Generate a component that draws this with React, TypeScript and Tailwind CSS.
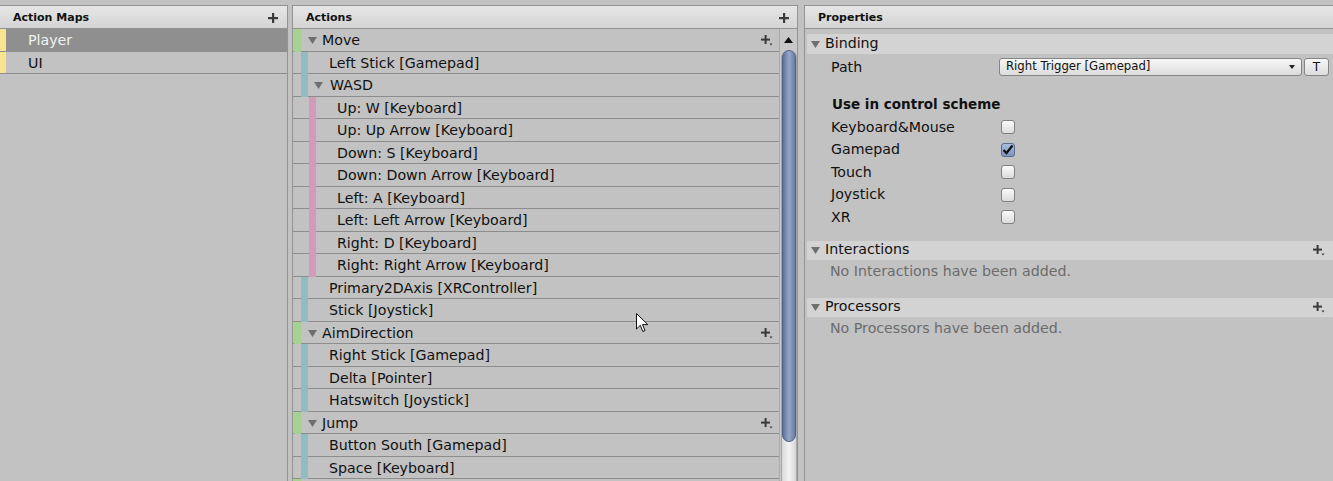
import React from "react";

type RowKind = "action" | "binding" | "composite" | "part";

const ROWS: { kind: RowKind; label: string }[] = [
  { kind: "action", label: "Move" },
  { kind: "binding", label: "Left Stick [Gamepad]" },
  { kind: "composite", label: "WASD" },
  { kind: "part", label: "Up: W [Keyboard]" },
  { kind: "part", label: "Up: Up Arrow [Keyboard]" },
  { kind: "part", label: "Down: S [Keyboard]" },
  { kind: "part", label: "Down: Down Arrow [Keyboard]" },
  { kind: "part", label: "Left: A [Keyboard]" },
  { kind: "part", label: "Left: Left Arrow [Keyboard]" },
  { kind: "part", label: "Right: D [Keyboard]" },
  { kind: "part", label: "Right: Right Arrow [Keyboard]" },
  { kind: "binding", label: "Primary2DAxis [XRController]" },
  { kind: "binding", label: "Stick [Joystick]" },
  { kind: "action", label: "AimDirection" },
  { kind: "binding", label: "Right Stick [Gamepad]" },
  { kind: "binding", label: "Delta [Pointer]" },
  { kind: "binding", label: "Hatswitch [Joystick]" },
  { kind: "action", label: "Jump" },
  { kind: "binding", label: "Button South [Gamepad]" },
  { kind: "binding", label: "Space [Keyboard]" },
  // next action is scrolled out of view, only its bar peeks in
  { kind: "action", label: "" },
];

const SCHEMES = [
  { label: "Keyboard&Mouse", checked: false },
  { label: "Gamepad", checked: true },
  { label: "Touch", checked: false },
  { label: "Joystick", checked: false },
  { label: "XR", checked: false },
];

const Triangle = ({ className = "" }: { className?: string }) => (
  <svg width="9" height="7" viewBox="0 0 9 7" className={className}>
    <polygon points="0,0 9,0 4.5,7" fill="#6f6f6f" />
  </svg>
);

const Plus = () => (
  <svg width="10" height="10" viewBox="0 0 10 10">
    <rect x="4" y="0" width="2.2" height="10" fill="#3a3a3a" />
    <rect x="0" y="4" width="10" height="2.2" fill="#3a3a3a" />
  </svg>
);

const PlusMenu = () => (
  <svg width="12" height="11" viewBox="0 0 12 11">
    <rect x="3.6" y="0" width="2" height="9" fill="#3a3a3a" />
    <rect x="0" y="3.6" width="9" height="2" fill="#3a3a3a" />
    <polygon points="8.5,8.5 11.5,8.5 10,10.5" fill="#3a3a3a" />
  </svg>
);

const PanelHeader = ({ title, plus = true, right = "pr-[9px]" }: { title: string; plus?: boolean; right?: string }) => (
  <div className={`flex h-[23px] shrink-0 items-center justify-between border-b border-[#939393] bg-gradient-to-b from-[#e6e6e6] to-[#d4d4d4] pt-[2px] pl-[13px] ${right}`}>
    <span className="text-[11px] font-bold text-[#111]">{title}</span>
    {plus && <Plus />}
  </div>
);

const ActionRow = ({ kind, label }: { kind: RowKind; label: string }) => {
  const bar =
    kind === "action"
      ? "left-[1px] bg-[#a7d193]"
      : kind === "part"
        ? "left-[16px] bg-[#d29bba]"
        : "left-[8px] bg-[#90bdc0]";
  return (
    <div className="relative flex h-[22.5px] shrink-0 items-center border-b border-[#8d8d8d] pt-[2px] pr-[6px]">
      <span className={`absolute top-0 bottom-[-1px] w-[7px] ${bar}`} />
      {kind === "action" && label && (
        <div className="flex flex-1 items-center pl-[15px]">
          <span className="flex w-[14px] items-center">
            <Triangle />
          </span>
          <span className="flex-1">{label}</span>
          <PlusMenu />
        </div>
      )}
      {kind === "composite" && (
        <div className="flex flex-1 items-center pl-[21px]">
          <span className="flex w-[16px] items-center">
            <Triangle />
          </span>
          <span>{label}</span>
        </div>
      )}
      {kind === "binding" && <span className="pl-[36px]">{label}</span>}
      {kind === "part" && <span className="pl-[44px]">{label}</span>}
    </div>
  );
};

const Checkbox = ({ checked }: { checked: boolean }) => (
  <span
    className={`flex h-[14px] w-[14px] items-center justify-center rounded-[3px] border ${
      checked
        ? "border-[#5b6c8c] bg-gradient-to-b from-[#a9bde0] to-[#7e95c2]"
        : "border-[#808080] bg-gradient-to-b from-[#fbfbfb] to-[#dcdcdc]"
    }`}
  >
    {checked && (
      <svg width="12" height="11" viewBox="0 0 12 11">
        <path d="M1.5 6 L4.5 9 L10.5 1.5" stroke="#111" strokeWidth="2.2" fill="none" />
      </svg>
    )}
  </span>
);

const SectionHeader = ({ title, plus, h = "h-[19px]" }: { title: string; plus?: boolean; h?: string }) => (
  <div className={`ml-[2px] flex ${h} shrink-0 items-center bg-[#d3d3d3] pl-[4px] pr-[8px]`}>
    <Triangle className="mr-[5px]" />
    <span className="flex-1">{title}</span>
    {plus && <PlusMenu />}
  </div>
);

export default function App() {
  return (
    <div
      className="relative flex h-[481px] w-[1333px] overflow-hidden bg-[#c2c2c2] pt-[5px] text-[14.2px] text-[#111]"
      style={{ fontFamily: '"DejaVu Sans", sans-serif' }}
    >
      {/* Action maps */}
      <div className="flex w-[288px] shrink-0 flex-col border-t border-r border-[#939393]">
        <PanelHeader title="Action Maps" />
        <div className="flex h-[22.5px] items-center border-b border-[#8d8d8d]">
          <span className="h-full w-[6px] bg-[#fbe28f]" />
          <span className="flex h-full flex-1 items-center bg-[#8f8f8f] pt-[2px] pl-[22px] text-[#f2f2f2]">Player</span>
        </div>
        <div className="flex h-[22.5px] items-center border-b border-[#8d8d8d]">
          <span className="h-full w-[6px] bg-[#fbe28f]" />
          <span className="pt-[2px] pl-[22px]">UI</span>
        </div>
      </div>

      {/* Actions */}
      <div className="ml-[4px] flex w-[506px] shrink-0 flex-col border-t border-r border-l border-[#939393]">
        <PanelHeader title="Actions" right="pr-[8px]" />
        <div className="flex min-h-0 flex-1">
          <div className="flex min-w-0 flex-1 flex-col overflow-hidden">
            {ROWS.map((r, i) => (
              <ActionRow key={i} kind={r.kind} label={r.label} />
            ))}
          </div>
          <div className="flex w-[18px] shrink-0 flex-col items-center border-l border-[#a9a9a9] bg-[#c8c8c8]">
            <div className="flex h-[21px] w-full items-center justify-center">
              <svg width="9" height="6" viewBox="0 0 9 6">
                <polygon points="0,6 9,6 4.5,0" fill="#111" />
              </svg>
            </div>
            <div className="flex w-[16px] flex-1 flex-col rounded-t-[8px] border-x border-[#a7a7a7] bg-gradient-to-r from-[#d9d9d9] via-[#f3f3f3] to-[#d6d6d6]">
              <div className="h-[392px] rounded-[8px] border border-[#4f6080] bg-gradient-to-r from-[#5f7296] via-[#94a7ca] to-[#6a7ea3]" />
            </div>
          </div>
        </div>
      </div>

      {/* Properties */}
      <div className="ml-[6px] flex flex-1 flex-col border-t border-l border-[#939393]">
        <PanelHeader title="Properties" plus={false} />
        <div className="mt-[5px]">
          <SectionHeader title="Binding" h="h-[20px]" />
        </div>
        <div className="mt-[2px] flex h-[22px] items-center pl-[26px] pr-[4px]">
          <span className="w-[168px] pt-[2px]">Path</span>
          <div className="flex h-[18px] flex-1 items-center rounded-[3px] border border-[#858585] bg-gradient-to-b from-[#f7f7f7] to-[#dcdcdc] pl-[6px] pr-[6px] text-[11.7px]">
            <span className="flex-1">Right Trigger [Gamepad]</span>
            <svg width="6" height="4" viewBox="0 0 6 4">
              <polygon points="0,0 6,0 3,4" fill="#222" />
            </svg>
          </div>
          <div className="ml-[2px] flex h-[18px] w-[25px] items-center justify-center rounded-[3px] border border-[#858585] bg-gradient-to-b from-[#f7f7f7] to-[#dcdcdc] text-[12px]">
            T
          </div>
        </div>
        <div className="mt-[17px] flex h-[18px] items-center pl-[27px] text-[13.5px] font-bold">
          Use in control scheme
        </div>
        <div className="mt-[3px] flex flex-col">
          {SCHEMES.map((s) => (
            <div key={s.label} className="flex h-[22.5px] items-center pl-[26px]">
              <span className="w-[170px]">{s.label}</span>
              <Checkbox checked={s.checked} />
            </div>
          ))}
        </div>
        <div className="mt-[12px]">
          <SectionHeader title="Interactions" plus />
        </div>
        <div className="flex h-[22px] items-center pt-[3px] pl-[25px] text-[#6c6c6c]">No Interactions have been added.</div>
        <div className="mt-[16px]">
          <SectionHeader title="Processors" plus />
        </div>
        <div className="flex h-[22px] items-center pt-[2px] pl-[25px] text-[#6c6c6c]">No Processors have been added.</div>
      </div>

      {/* mouse pointer */}
      <svg className="absolute left-[636px] top-[313px]" width="13" height="20" viewBox="0 0 13 20">
        <path d="M0.5 0.5 L0.5 16 L4.3 12.3 L6.8 18.5 L9 17.6 L6.5 11.6 L11.8 11.6 Z" fill="#fff" stroke="#111" strokeWidth="1" />
      </svg>
    </div>
  );
}
